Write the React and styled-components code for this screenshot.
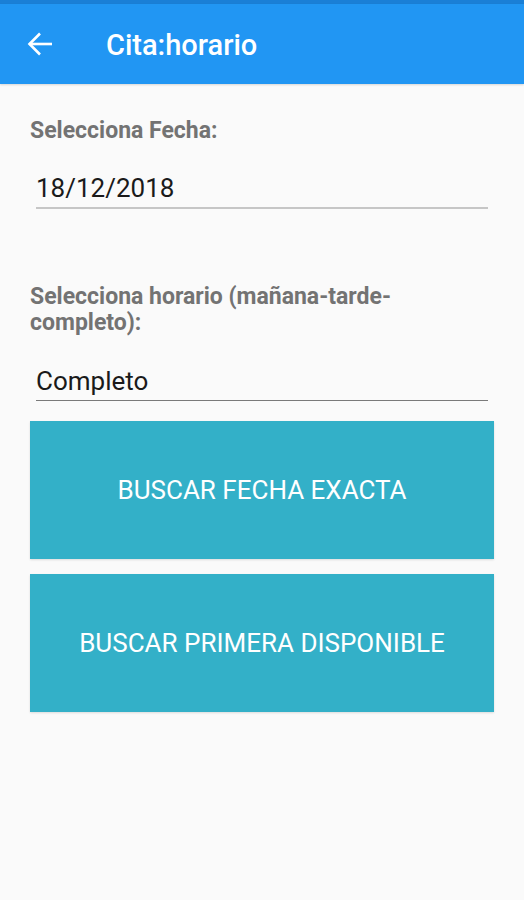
import React from 'react'
import styled, { createGlobalStyle } from 'styled-components'

const color = {
	status: '#1A7FD6',
	primary: '#2196F3',
	page: '#FAFAFA',
	label: '#737373',
	text: '#1A1A1A',
	line: '#C6C6C6',
	lineDark: '#7A7A7A',
	button: '#33B0C8',
}

const GlobalStyle = createGlobalStyle`
	html, body {
		margin: 0;
		padding: 0;
		background: ${color.page};
		font-family: Roboto, "Liberation Sans", sans-serif;
	}
`

const Screen = styled.div`
	width: 524px;
	min-height: 900px;
	background: ${color.page};
	display: flex;
	flex-direction: column;
`

const StatusStrip = styled.div`
	height: 4px;
	background: ${color.status};
`

const AppBar = styled.header`
	height: 80px;
	background: ${color.primary};
	display: flex;
	align-items: center;
	padding-left: 26px;
	gap: 52px;
	box-shadow: 0 1px 2px rgba(0,0,0,.15);
`

const Title = styled.h1`
	margin: 0;
	padding-top: 2px;
	color: white;
	font-size: 29px;
	font-weight: 500;
	line-height: 32px;
`

const Content = styled.main`
	display: flex;
	flex-direction: column;
	padding: 0 30px;
`

const Label = styled.label`
	display: block;
	max-width: 440px;
	margin-top: ${p => p.top || 0}px;
	color: ${color.label};
	font-size: 23px;
	font-weight: 700;
	line-height: 26px;
`

const Field = styled.div`
	width: 452px;
	box-sizing: border-box;
	margin: ${p => p.gap || 20}px 6px 0 6px;
	padding-bottom: 4px;
	color: ${color.text};
	font-size: 26px;
	line-height: 30px;
	border-bottom: ${p => p.dark ? `1.5px solid ${color.lineDark}` : `2.5px solid ${color.line}`};
`

const Button = styled.button`
	display: flex;
	align-items: center;
	justify-content: center;
	width: 464px;
	height: 138px;
	margin-top: ${p => p.top || 0}px;
	padding: 0;
	border: none;
	background: ${color.button};
	color: white;
	font-family: Roboto, "Liberation Sans", sans-serif;
	font-size: 26px;
	text-transform: uppercase;
	box-shadow: 0 1px 2px rgba(0,0,0,.12);
`

const BackArrow = () => (
	<svg width="28" height="28" viewBox="0 0 28 28" fill="none" stroke="white" strokeWidth="2.6" strokeLinecap="butt">
		<path d="M26 14H3.5" />
		<path d="M14 3.5L3.5 14L14 24.5" />
	</svg>
)

export default function App() {
	return <>
		<GlobalStyle />
		<Screen>
			<StatusStrip />
			<AppBar>
				<BackArrow />
				<Title>Cita:horario</Title>
			</AppBar>
			<Content>
				<Label top={34}>Selecciona Fecha:</Label>
				<Field gap={29}>18/12/2018</Field>
				<Label top={75}>Selecciona horario (mañana-tarde-completo):</Label>
				<Field gap={30} dark>Completo</Field>
				<Button top={20}>Buscar fecha exacta</Button>
				<Button top={15}>Buscar primera disponible</Button>
			</Content>
		</Screen>
	</>
}
